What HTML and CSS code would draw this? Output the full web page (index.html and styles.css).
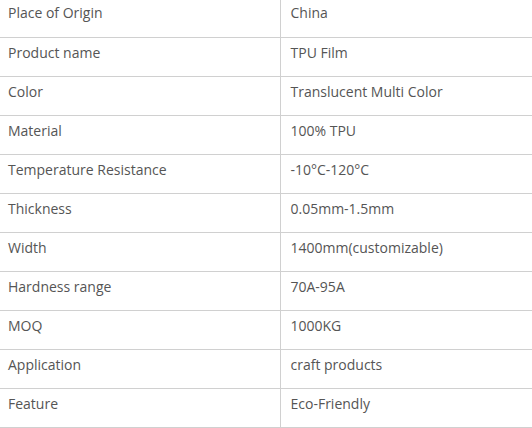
FILE: index.html
```html
<!DOCTYPE html>
<html>
<head>
<meta charset="utf-8">
<link rel="stylesheet" href="styles.css">
</head>
<body>
<table class="spec">
<tbody>
<tr><td class="k">Place of Origin</td><td class="v">China</td></tr>
<tr><td class="k">Product name</td><td class="v">TPU Film</td></tr>
<tr><td class="k">Color</td><td class="v">Translucent Multi Color</td></tr>
<tr><td class="k">Material</td><td class="v">100% TPU</td></tr>
<tr><td class="k">Temperature Resistance</td><td class="v">-10°C-120°C</td></tr>
<tr><td class="k">Thickness</td><td class="v">0.05mm-1.5mm</td></tr>
<tr><td class="k">Width</td><td class="v">1400mm(customizable)</td></tr>
<tr><td class="k">Hardness range</td><td class="v">70A-95A</td></tr>
<tr><td class="k">MOQ</td><td class="v">1000KG</td></tr>
<tr><td class="k">Application</td><td class="v">craft products</td></tr>
<tr><td class="k">Feature</td><td class="v">Eco-Friendly</td></tr>
</tbody>
</table>
</body>
</html>
```
FILE: styles.css
```css
html, body {
  margin: 0;
  padding: 0;
  background: #fff;
}
.spec {
  border-collapse: collapse;
  width: 532px;
  margin-top: -2px;
  font-family: "Open Sans", "Noto Sans", sans-serif;
  font-size: 14px;
  color: #555;
}
.spec tr {
  height: 39px;
}
.spec td {
  padding: 5px 0 0 0;
  line-height: 20px;
  vertical-align: top;
  border-bottom: 1px solid #d0d0d0;
}
.spec td.k {
  box-sizing: border-box;
  width: 280px;
  padding-left: 8px;
  border-right: 1px solid #d0d0d0;
}
.spec td.v {
  padding-left: 10px;
}
```
